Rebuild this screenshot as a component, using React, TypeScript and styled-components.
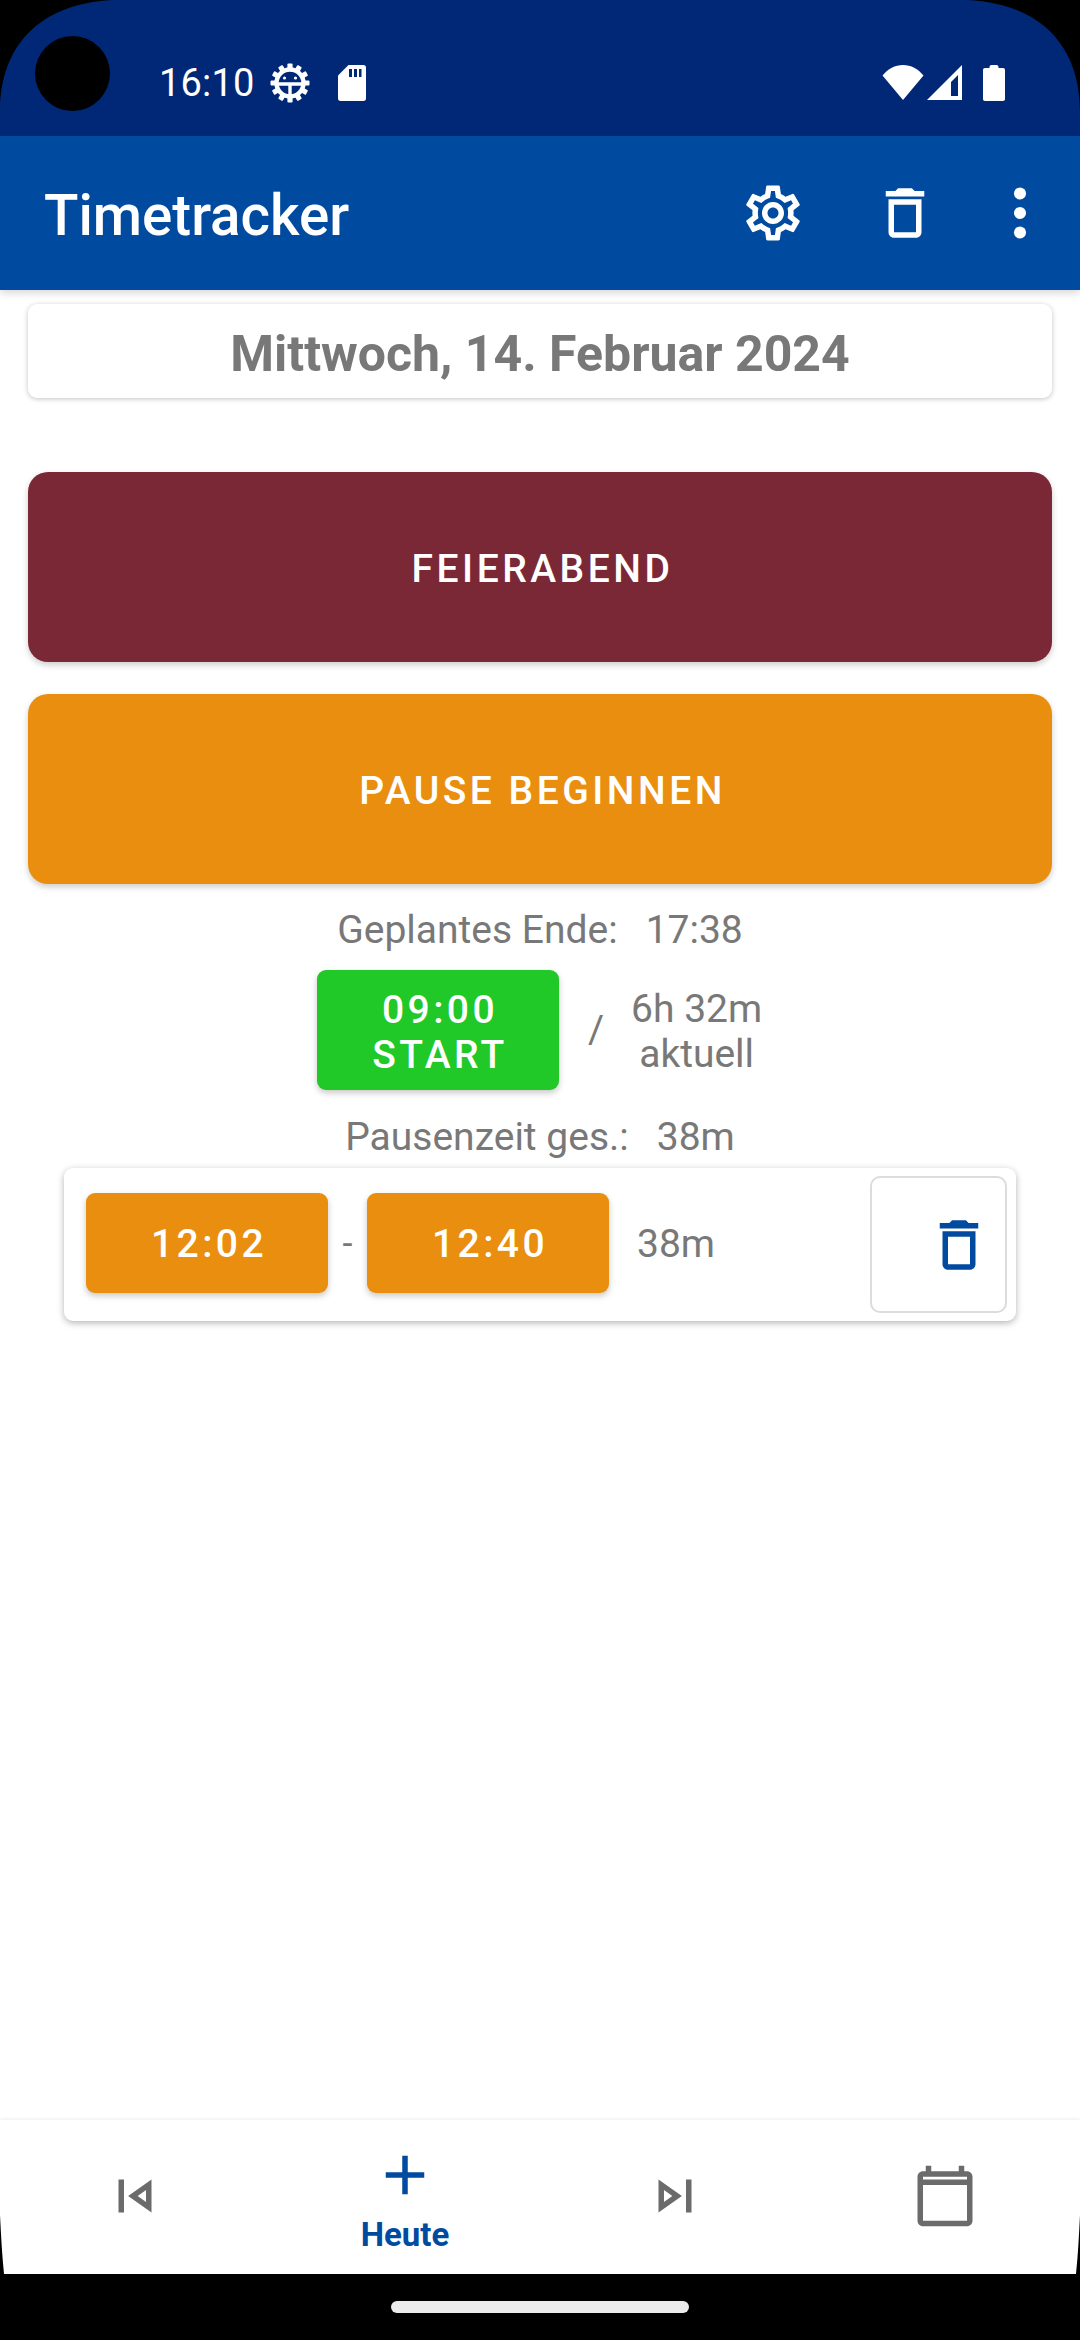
import React from "react";
import styled, { createGlobalStyle } from "styled-components";

const Global = createGlobalStyle`
  html, body { margin: 0; padding: 0; background: #000; }
  * { box-sizing: border-box; }
  body { font-family: Roboto, "Liberation Sans", sans-serif; }
`;

const Screen = styled.div`
  position: relative;
  width: 1080px;
  height: 2340px;
  display: flex;
  flex-direction: column;
  background: #fff;
  overflow: hidden;
`;

const CornerMask = styled.svg`
  position: absolute;
  left: 0;
  top: 0;
  width: 1080px;
  height: 2340px;
  pointer-events: none;
  z-index: 5;
`;

const StatusBar = styled.div`
  height: 136px;
  flex: none;
  background: #012876;
  display: flex;
  align-items: center;
  padding: 30px 0 0 159px;
  color: #fff;
`;

const Clock = styled.span`
  font-size: 38px;
  letter-spacing: 0.2px;
  line-height: 44px;
  margin-right: 15px;
`;

const StatusRight = styled.div`
  margin-left: auto;
  display: flex;
  align-items: center;
  margin-right: 75px;
`;

const AppBar = styled.header`
  height: 154px;
  flex: none;
  background: #004ba0;
  display: flex;
  align-items: center;
  padding-left: 44px;
  box-shadow: 0 3px 8px rgba(0, 0, 0, 0.16);
  position: relative;
  z-index: 2;
`;

const Title = styled.h1`
  margin: 0 auto 0 0;
  padding-top: 5px;
  font-size: 56.5px;
  font-weight: 500;
  color: #fff;
  line-height: 64px;
`;

const BarIcon = styled.svg<{ $mr: number }>`
  width: 66px;
  height: 66px;
  flex: none;
  fill: #fff;
  margin-right: ${(p) => p.$mr}px;
`;

const Content = styled.main`
  flex: 1;
  display: flex;
  flex-direction: column;
  align-items: center;
  padding: 14px 28px 0;
`;

const DateCard = styled.div`
  width: 100%;
  height: 94px;
  padding-top: 5px;
  background: #fff;
  border-radius: 9px;
  box-shadow: 0 1px 5px rgba(0, 0, 0, 0.24);
  display: flex;
  align-items: center;
  justify-content: center;
  color: #787878;
  font-size: 50px;
  font-weight: 700;
`;

const BigButton = styled.button<{ $bg: string; $mt: number; $ls: number }>`
  width: 100%;
  height: 190px;
  margin-top: ${(p) => p.$mt}px;
  padding: 3px 0 0 5px;
  border: 0;
  border-radius: 20px;
  background: ${(p) => p.$bg};
  color: #fff;
  font-family: inherit;
  font-size: 39px;
  font-weight: 500;
  letter-spacing: ${(p) => p.$ls}px;
  box-shadow: 0 3px 6px rgba(0, 0, 0, 0.2);
`;

const Info = styled.div<{ $mt: number }>`
  margin-top: ${(p) => p.$mt}px;
  display: flex;
  gap: 28px;
  color: #787878;
  font-size: 39px;
  line-height: 46px;
`;

const StartRow = styled.div`
  margin-top: 17px;
  display: flex;
  align-items: center;
  width: 1024px;
  padding-left: 289px;
`;

const TimeButton = styled.button<{ $bg: string; $h: number }>`
  width: 242px;
  height: ${(p) => p.$h}px;
  flex: none;
  border: 0;
  padding: 5px 0 0 4px;
  border-radius: 9px;
  background: ${(p) => p.$bg};
  color: #fff;
  font-family: inherit;
  font-size: 39px;
  font-weight: 500;
  letter-spacing: 3.4px;
  line-height: 45px;
  box-shadow: 0 3px 6px rgba(0, 0, 0, 0.22);
`;

const PauseTime = styled(TimeButton)`
  margin-bottom: 3px;
  padding-top: 3px;
`;

const Slash = styled.span`
  margin-left: 29px;
  color: #787878;
  font-size: 39px;
`;

const Current = styled.div`
  margin-left: 27px;
  padding-top: 3px;
  color: #787878;
  font-size: 39px;
  line-height: 45px;
  text-align: center;
`;

const PauseCard = styled.div`
  margin-top: 8px;
  width: 952px;
  height: 153px;
  background: #fff;
  border-radius: 9px;
  box-shadow: 0 2px 7px rgba(0, 0, 0, 0.3);
  display: flex;
  align-items: center;
  padding: 0 9px 0 22px;
`;

const Dash = styled.span`
  width: 39px;
  text-align: center;
  color: #787878;
  font-size: 36px;
  margin-bottom: 2px;
`;

const Duration = styled.span`
  margin-left: 28px;
  margin-right: auto;
  margin-bottom: 2px;
  color: #787878;
  font-size: 39px;
`;

const DeleteBox = styled.button`
  width: 137px;
  height: 137px;
  border: 2px solid #dcdcdc;
  border-radius: 10px;
  background: #fff;
  padding: 0 0 0 40px;
  display: flex;
  align-items: center;
  justify-content: center;
`;

const BlueTrash = styled.svg`
  width: 66px;
  height: 66px;
  flex: none;
  fill: #004ba0;
`;

const BottomNav = styled.nav`
  height: 154px;
  flex: none;
  display: grid;
  grid-template-columns: repeat(4, 270px);
  background: #fff;
  box-shadow: 0 -1px 3px rgba(0, 0, 0, 0.07);
`;

const NavItem = styled.div`
  display: flex;
  flex-direction: column;
  align-items: center;
  justify-content: center;
  padding-bottom: 2px;
`;

const NavIcon = styled.svg<{ $active?: boolean }>`
  width: 66px;
  height: 66px;
  fill: ${(p) => (p.$active ? "#004ba0" : "#6b6b6b")};
`;

const NavLabel = styled.span`
  color: #004ba0;
  font-size: 33px;
  font-weight: 700;
  line-height: 38px;
  margin-top: 8px;
  margin-bottom: -4px;
`;

const GestureArea = styled.div`
  height: 66px;
  flex: none;
  background: #000;
  display: flex;
  justify-content: center;
  padding-top: 27px;
`;

const HomeBar = styled.div`
  width: 298px;
  height: 12px;
  border-radius: 6px;
  background: #ececec;
`;

const Cutout = styled.div`
  position: absolute;
  left: 35px;
  top: 36px;
  width: 75px;
  height: 75px;
  border-radius: 50%;
  background: #000;
  z-index: 6;
`;

const GEAR =
  "M19.43 12.98c.04-.32.07-.64.07-.98 0-.34-.03-.66-.07-.98l2.11-1.65c.19-.15.24-.42.12-.64l-2-3.46c-.09-.16-.26-.25-.44-.25-.06 0-.12.01-.17.03l-2.49 1c-.52-.4-1.08-.73-1.69-.98l-.38-2.65C14.46 2.18 14.25 2 14 2h-4c-.25 0-.46.18-.49.42l-.38 2.65c-.61.25-1.17.59-1.69.98l-2.49-1c-.06-.02-.12-.03-.18-.03-.17 0-.34.09-.43.25l-2 3.46c-.13.22-.07.49.12.64l2.11 1.65c-.04.32-.07.65-.07.98 0 .33.03.66.07.98l-2.11 1.65c-.19.15-.24.42-.12.64l2 3.46c.09.16.26.25.44.25.06 0 .12-.01.17-.03l2.49-1c.52.4 1.08.73 1.69.98l.38 2.65c.03.24.24.42.49.42h4c.25 0 .46-.18.49-.42l.38-2.65c.61-.25 1.17-.59 1.69-.98l2.49 1c.06.02.12.03.18.03.17 0 .34-.09.43-.25l2-3.46c.12-.22.07-.49-.12-.64l-2.11-1.65zm-1.98-1.71c.04.31.05.52.05.73 0 .21-.02.43-.05.73l-.14 1.13.89.7 1.08.84-.7 1.21-1.27-.51-1.04-.42-.9.68c-.43.32-.84.56-1.25.73l-1.06.43-.16 1.13-.2 1.35h-1.4l-.19-1.35-.16-1.13-1.06-.43c-.43-.18-.83-.41-1.23-.71l-.91-.7-1.06.43-1.27.51-.7-1.21 1.08-.84.89-.7-.14-1.13c-.03-.31-.05-.54-.05-.74s.02-.43.05-.73l.14-1.13-.89-.7-1.08-.84.7-1.21 1.27.51 1.04.42.9-.68c.43-.32.84-.56 1.25-.73l1.06-.43.16-1.13.2-1.35h1.39l.19 1.35.16 1.13 1.06.43c.43.18.83.41 1.23.71l.91.7 1.06-.43 1.27-.51.7 1.21-1.07.85-.89.7.14 1.13zM12 8c-2.21 0-4 1.79-4 4s1.79 4 4 4 4-1.79 4-4-1.79-4-4-4zm0 6c-1.1 0-2-.9-2-2s.9-2 2-2 2 .9 2 2-.9 2-2 2z";
const TRASH = "M6 19c0 1.1.9 2 2 2h8c1.1 0 2-.9 2-2V7H6v12zM8 9h8v10H8V9zm7.5-5l-1-1h-5l-1 1H5v2h14V4h-3.5z";

const DebugGear = () => (
  <svg width="40" height="40" viewBox="0 0 40 40" style={{ marginRight: 28 }}>
    <g fill="#fff">
      {Array.from({ length: 12 }).map((_, i) => (
        <rect key={i} x="17.4" y="0.5" width="5.2" height="7" rx="1" transform={`rotate(${i * 30} 20 20)`} />
      ))}
    </g>
    <circle cx="20" cy="20" r="13.5" fill="#012876" stroke="#fff" strokeWidth="4.4" />
    <path d="M7 21h26M20 21v13" stroke="#fff" strokeWidth="3.4" fill="none" />
    <circle cx="14.5" cy="15" r="1.6" fill="#fff" />
    <circle cx="25.5" cy="15" r="1.6" fill="#fff" />
  </svg>
);

const SdCard = () => (
  <svg width="28" height="36" viewBox="0 0 28 36">
    <path
      fill="#fff"
      d="M10.5 0H25.5C27 0 28 1 28 2.5V33.5C28 35 27 36 25.5 36H2.5C1 36 0 35 0 33.5V10.5z"
    />
    <path fill="#012876" d="M14 4h3v8h-3zM19 4h3v8h-3zM24 4h2.5v8H24z" transform="translate(-3 0)" />
  </svg>
);

const Wifi = () => (
  <svg width="42" height="36" viewBox="0 0 42 36" style={{ marginRight: 3 }}>
    <path fill="#fff" d="M21 35 0.5 10.5C6 4 13 0 21 0s15 4 20.5 10.5z" />
  </svg>
);

const Signal = () => (
  <svg width="36" height="36" viewBox="0 0 36 36" style={{ marginRight: 20 }}>
    <path fill="#fff" fillRule="evenodd" d="M35 0V35H0zM31 10 24 17V31H31z" />
  </svg>
);

const Battery = () => (
  <svg width="22" height="36" viewBox="0 0 22 36">
    <path
      fill="#fff"
      d="M6.5 2C6.5 1 7.2 0 8.5 0H13.5C14.8 0 15.5 1 15.5 2V3H20C21.2 3 22 3.8 22 5V34C22 35.2 21.2 36 20 36H2C.8 36 0 35.2 0 34V5C0 3.8.8 3 2 3H6.5z"
    />
  </svg>
);

export default function App() {
  return (
    <Screen>
      <Global />
      <Cutout />
      <CornerMask viewBox="0 0 1080 2340">
        <path
          fill="#000"
          d="M0 0H112C40 4 0 45 0 112ZM1080 0H968C1040 4 1080 45 1080 112ZM0 2274H4C2 2255 1 2235 0 2215ZM1080 2274H1076C1078 2255 1079 2235 1080 2215Z"
        />
      </CornerMask>

      <StatusBar>
        <Clock>16:10</Clock>
        <DebugGear />
        <SdCard />
        <StatusRight>
          <Wifi />
          <Signal />
          <Battery />
        </StatusRight>
      </StatusBar>

      <AppBar>
        <Title>Timetracker</Title>
        <BarIcon viewBox="0 0 24 24" $mr={66}>
          <path d={GEAR} />
        </BarIcon>
        <BarIcon viewBox="0 0 24 24" $mr={49}>
          <path d={TRASH} />
        </BarIcon>
        <BarIcon viewBox="0 0 24 24" $mr={27}>
          <circle cx="12" cy="4.9" r="2.2" />
          <circle cx="12" cy="12" r="2.2" />
          <circle cx="12" cy="19.1" r="2.2" />
        </BarIcon>
      </AppBar>

      <Content>
        <DateCard>Mittwoch, 14. Februar 2024</DateCard>
        <BigButton $bg="#7b2836" $mt={74} $ls={3.5}>
          FEIERABEND
        </BigButton>
        <BigButton $bg="#e98e0e" $mt={32} $ls={3.5}>
          PAUSE BEGINNEN
        </BigButton>
        <Info $mt={23}>
          <span>Geplantes Ende:</span>
          <span>17:38</span>
        </Info>
        <StartRow>
          <TimeButton $bg="#20c828" $h={120}>
            09:00
            <br />
            START
          </TimeButton>
          <Slash>/</Slash>
          <Current>
            6h 32m
            <br />
            aktuell
          </Current>
        </StartRow>
        <Info $mt={24}>
          <span>Pausenzeit ges.:</span>
          <span>38m</span>
        </Info>
        <PauseCard>
          <PauseTime $bg="#e98e0e" $h={100}>
            12:02
          </PauseTime>
          <Dash>-</Dash>
          <PauseTime $bg="#e98e0e" $h={100}>
            12:40
          </PauseTime>
          <Duration>38m</Duration>
          <DeleteBox>
            <BlueTrash viewBox="0 0 24 24">
              <path d={TRASH} />
            </BlueTrash>
          </DeleteBox>
        </PauseCard>
      </Content>

      <BottomNav>
        <NavItem>
          <NavIcon viewBox="0 0 24 24">
            <path d="M6 6h2v12H6zm3.5 6l8.5 6V6l-8.5 6zm6.5 2.14L12.97 12 16 9.86v4.28z" />
          </NavIcon>
        </NavItem>
        <NavItem>
          <NavIcon viewBox="0 0 24 24" $active>
            <path d="M19 13h-6v6h-2v-6H5v-2h6V5h2v6h6v2z" />
          </NavIcon>
          <NavLabel>Heute</NavLabel>
        </NavItem>
        <NavItem>
          <NavIcon viewBox="0 0 24 24">
            <path d="M6 18l8.5-6L6 6v12zm2-8.14L11.03 12 8 14.14V9.86zM16 6h2v12h-2z" />
          </NavIcon>
        </NavItem>
        <NavItem>
          <NavIcon viewBox="0 0 24 24">
            <path d="M20 3h-1V1h-2v2H7V1H5v2H4c-1.1 0-2 .9-2 2v16c0 1.1.9 2 2 2h16c1.1 0 2-.9 2-2V5c0-1.1-.9-2-2-2zm0 18H4V8h16v13zM4 6V5h16v1z" fillRule="evenodd" />
          </NavIcon>
        </NavItem>
      </BottomNav>

      <GestureArea>
        <HomeBar />
      </GestureArea>
    </Screen>
  );
}
